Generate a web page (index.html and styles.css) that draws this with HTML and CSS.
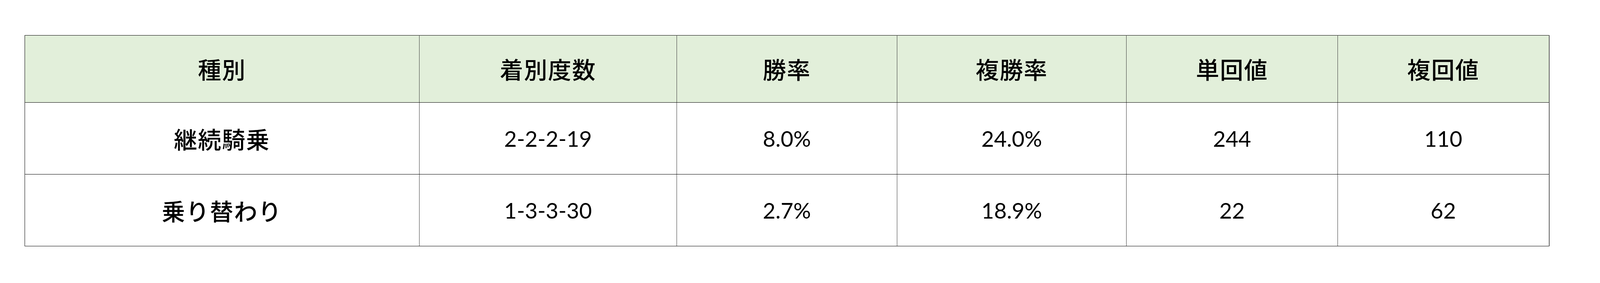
FILE: index.html
```html
<!DOCTYPE html>
<html lang="ja">
<head>
<meta charset="utf-8">
<title>継続騎乗と乗り替わり</title>
<link rel="stylesheet" href="styles.css">
</head>
<body>
<table class="stats">
  <colgroup>
    <col class="c1"><col class="c2"><col class="c3"><col class="c4"><col class="c5"><col class="c6">
  </colgroup>
  <thead>
    <tr>
      <th>種別</th>
      <th>着別度数</th>
      <th>勝率</th>
      <th>複勝率</th>
      <th>単回値</th>
      <th>複回値</th>
    </tr>
  </thead>
  <tbody>
    <tr>
      <td class="jp">継続騎乗</td>
      <td>2-2-2-19</td>
      <td>8.0%</td>
      <td>24.0%</td>
      <td>244</td>
      <td>110</td>
    </tr>
    <tr>
      <td class="jp">乗り替わり</td>
      <td>1-3-3-30</td>
      <td>2.7%</td>
      <td>18.9%</td>
      <td>22</td>
      <td>62</td>
    </tr>
  </tbody>
</table>
</body>
</html>
```
FILE: styles.css
```css
/* 1rem = 100 reference pixels of a 4387px-wide canvas */
html {
  font-size: calc(100vw / 43.87);
  background: #ffffff;
}
html, body {
  margin: 0;
  padding: 0;
}
body {
  padding: 0.96rem 0 0 0.67rem;
}
.stats {
  border-collapse: collapse;
  table-layout: fixed;
  width: 41.8rem;
  color: #000;
}
.c1 { width: 10.82rem; }
.c2 { width: 7.06rem; }
.c3 { width: 6.04rem; }
.c4 { width: 6.29rem; }
.c5 { width: 5.79rem; }
.c6 { width: 5.8rem; }

.stats th,
.stats td {
  text-align: center;
  vertical-align: middle;
  padding: 0;
  border-top: 1px solid #000;
  border-bottom: 1px solid #000;
  border-left: 1px solid #3a3a3a;
  border-right: 1px solid #3a3a3a;
}
.stats th:first-child,
.stats td:first-child {
  border-left: 1px solid #000;
}
.stats th:last-child,
.stats td:last-child {
  border-right: 2px solid #5a5a5a;
}
.stats thead tr { height: 1.85rem; }
.stats tbody tr { height: 1.97rem; }

.stats th {
  background: #e2efda;
  font-family: "Noto Sans CJK JP", "Noto Sans", sans-serif;
  font-weight: 500;
  font-size: 0.64rem;
  letter-spacing: 0.02rem;
}
.stats td {
  font-family: Lato, "Noto Sans CJK JP", sans-serif;
  font-size: 0.6rem;
  font-weight: 400;
}
.stats td.jp {
  font-family: "Noto Sans CJK JP", sans-serif;
  font-weight: 500;
  font-size: 0.64rem;
  letter-spacing: 0.02rem;
}
```
